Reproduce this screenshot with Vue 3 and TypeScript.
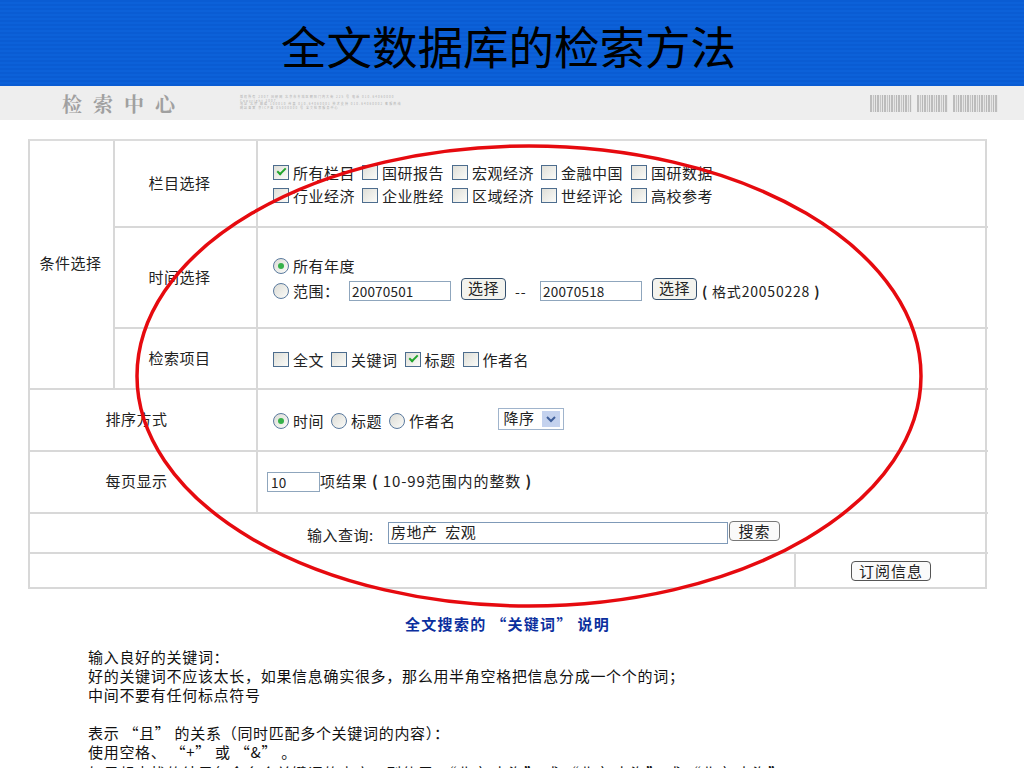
<script setup lang="ts">
const row1 = [
  { t: '所有栏目', c: true },
  { t: '国研报告', c: false },
  { t: '宏观经济', c: false },
  { t: '金融中国', c: false },
  { t: '国研数据', c: false },
]
const row2 = ['行业经济', '企业胜经', '区域经济', '世经评论', '高校参考']
const items = [
  { t: '全文', c: false },
  { t: '关键词', c: false },
  { t: '标题', c: true },
  { t: '作者名', c: false },
]
const sorts = [
  { t: '时间', c: true },
  { t: '标题', c: false },
  { t: '作者名', c: false },
]
</script>

<template>
  <div class="slide">
    <header class="head"><h1>全文数据库的检索方法</h1></header>
    <div class="strip">
      <div class="logo">检索中心</div>
      <div class="tiny">
        <span>版权所有 2007 国研网 北京市东城区朝阳门内大街 225 号 电话 010-64060000</span>
        <span>Copyright 2007</span>
        <span>地址 北京 邮编 100010 传真 010-64060001 技术支持 010-64060002 客服热线</span>
        <span>网站备案 京ICP备 05000000 号 全文检索服务中心</span>
      </div>
      <div class="code">
        <i class="bars b1"></i>
        <i class="bars b2"></i>
        <i class="bars b3"></i>
      </div>
    </div>

    <section class="form">
      <div class="c-a">条件选择</div>
      <div class="c-b r1">栏目选择</div>
      <div class="c-c r1 lines">
        <div class="line cols">
          <label v-for="x in row1" :key="x.t" class="opt">
            <span class="box" :class="{ on: x.c }"></span>{{ x.t }}
          </label>
        </div>
        <div class="line cols">
          <label v-for="x in row2" :key="x" class="opt"><span class="box"></span>{{ x }}</label>
        </div>
      </div>
      <div class="c-b r2">时间选择</div>
      <div class="c-c r2 lines wide">
        <div class="line"><label class="opt"><span class="radio on"></span>所有年度</label></div>
        <div class="line dates">
          <label class="opt range"><span class="radio"></span>范围：</label>
          <span class="field date">20070501</span>
          <span class="btn">选择</span>
          <span class="dash">--</span>
          <span class="field date">20070518</span>
          <span class="btn">选择</span>
          <span class="fmt"><b>(</b> 格式20050228 <b>)</b></span>
        </div>
      </div>
      <div class="c-b r3">检索项目</div>
      <div class="c-c r3 line gap">
        <label v-for="x in items" :key="x.t" class="opt">
          <span class="box" :class="{ on: x.c }"></span>{{ x.t }}
        </label>
      </div>
      <div class="c-w r4">排序方式</div>
      <div class="c-c r4 line sort">
        <label v-for="x in sorts" :key="x.t" class="opt">
          <span class="radio" :class="{ on: x.c }"></span>{{ x.t }}
        </label>
        <span class="select"><span class="sel-text">降序</span><span class="arrow"><svg width="10" height="7" viewBox="0 0 10 7"><path d="M1 1l4 4 4-4" fill="none" stroke="#3f5f9a" stroke-width="2"/></svg></span></span>
      </div>
      <div class="c-w r5">每页显示</div>
      <div class="c-c r5 line count">
        <span class="field num">10</span><span class="count-text">项结果 <b>(</b> 10-99范围内的整数 <b>)</b></span>
      </div>
      <div class="r6 search">
        <span class="q">输入查询:</span>
        <span class="field query">房地产&nbsp; 宏观</span>
        <span class="btn grey">搜索</span>
      </div>
      <div class="r7 foot-l"></div>
      <div class="r7 foot-r"><span class="btn grey sub">订阅信息</span></div>
    </section>

    <h2 class="note-title">全文搜索的 “关键词” 说明</h2>
    <div class="notes">
      <p>输入良好的关键词：</p>
      <p>好的关键词不应该太长，如果信息确实很多，那么用半角空格把信息分成一个个的词；</p>
      <p>中间不要有任何标点符号</p>
      <p class="blank">&nbsp;</p>
      <p>表示 “且” 的关系（同时匹配多个关键词的内容）：</p>
      <p>使用空格、 “+” 或 “&amp;” 。</p>
      <p class="last">如果想查找的结果包含多个关键词的内容，则使用：“北京 上海” 或 “北京 上海” 或 “北京 上海”</p>
    </div>

    <svg class="ring" width="1024" height="768" viewBox="0 0 1024 768">
      <ellipse cx="529" cy="376" rx="392" ry="230" fill="none" stroke="#e60a0f" stroke-width="3.500"/>
    </svg>
  </div>
</template>

<style scoped>
.slide {
  position: relative;
  width: 1024px;
  height: 768px;
  overflow: hidden;
  background: #fff;
  font-family: "Noto Sans CJK SC", "Liberation Sans", sans-serif;
  font-size: 15px;
  letter-spacing: 0.5px;
  color: #222;
}
.head {
  height: 86px;
  background: repeating-linear-gradient(180deg, #0a5cd3 0 2px, #0c61d9 2px 4px);
  display: flex;
  align-items: center;
  justify-content: center;
}
.head h1 {
  margin: 6px 7px 0 0;
  font-size: 45.500px;
  line-height: 1;
  font-weight: 400;
  letter-spacing: 0;
  color: #000;
}
.strip {
  height: 34px;
  background: #eeeeee;
  display: flex;
  align-items: center;
  padding: 0 26px 0 62px;
}
.logo {
  flex: none;
  width: 178px;
  font-family: "Noto Serif CJK SC", "Noto Sans CJK SC", sans-serif;
  font-size: 20px;
  font-weight: 700;
  letter-spacing: 11px;
  color: #a0a0a0;
  white-space: nowrap;
}
.tiny {
  display: flex;
  flex-direction: column;
  font-size: 3px;
  line-height: 3.500px;
  letter-spacing: 1.100px;
  color: #b0b0b0;
  white-space: nowrap;
}
.code {
  margin-left: auto;
  width: 128px;
  height: 17px;
  display: flex;
  justify-content: space-between;
}
.bars {
  display: block;
  background: repeating-linear-gradient(90deg, #bcbcbc 0 2px, #e6e6e6 2px 3px, #c6c6c6 3px 4px, #e6e6e6 4px 5px, #b8b8b8 5px 6px, #e6e6e6 6px 7px);
}
.b1 { width: 42px; }
.b2 { width: 31px; }
.b3 { width: 45px; }
.form {
  margin: 19px 0 0 28px;
  width: 959px;
  height: 450px;
  box-sizing: border-box;
  border: 2px solid #d8d8d8;
  border-top-color: #dcdcdc;
  display: grid;
  grid-template-columns: 85px 143px 538px 192px;
  grid-template-rows: 87px 101px 61px 62px 62px 40px 1fr;
}
.form > div {
  box-sizing: border-box;
}
.c-a {
  grid-column: 1;
  grid-row: 1 / 4;
  display: flex;
  align-items: center;
  justify-content: center;
  border-right: 2px solid #d8d8d8;
  border-bottom: 2px solid #d8d8d8;
  padding: 0 2px 4px 0;
}
.c-b {
  grid-column: 2;
  display: flex;
  align-items: center;
  justify-content: center;
  border-right: 2px solid #d8d8d8;
  border-bottom: 2px solid #d8d8d8;
  padding: 0 12px 3px 0;
}
.c-w {
  grid-column: 1 / 3;
  display: flex;
  align-items: center;
  justify-content: center;
  border-right: 2px solid #d8d8d8;
  border-bottom: 2px solid #d8d8d8;
  padding: 0 13px 3px 0;
}
.c-c {
  grid-column: 3 / 5;
  border-bottom: 2px solid #d8d8d8;
  padding-left: 15px;
}
.r1 { grid-row: 1; }
.r2 { grid-row: 2; }
.r3 { grid-row: 3; }
.r4 { grid-row: 4; }
.r5 { grid-row: 5; }
.r6 { grid-row: 6; }
.r7 { grid-row: 7; }
.lines {
  display: flex;
  flex-direction: column;
  justify-content: center;
  gap: 1px;
}
.wide {
  gap: 3px;
  padding-top: 1px;
}
.line {
  display: flex;
  align-items: center;
  height: 22px;
}
.c-c.line {
  height: auto;
}
.cols {
  display: grid;
  grid-template-columns: 89px 90px 89px 90px 90px;
}
.gap {
  gap: 7px;
  padding-top: 2px;
}
.opt {
  display: flex;
  align-items: center;
  gap: 4px;
  white-space: nowrap;
}
.box {
  flex: none;
  box-sizing: border-box;
  width: 16px;
  height: 15px;
  border: 1px solid #4d6d8e;
  background: linear-gradient(135deg, #dfdfd8, #fbfbf8);
  position: relative;
}
.box.on::after {
  content: "";
  position: absolute;
  left: 3px;
  top: 2px;
  width: 7px;
  height: 3px;
  border-left: 2px solid #22a52c;
  border-bottom: 2px solid #22a52c;
  transform: rotate(-45deg);
}
.radio {
  flex: none;
  box-sizing: border-box;
  width: 16px;
  height: 16px;
  border-radius: 50%;
  border: 1px solid #5a7a9e;
  background: linear-gradient(135deg, #dcdcd6, #fbfbf8);
  position: relative;
}
.radio.on::after {
  content: "";
  position: absolute;
  left: 4px;
  top: 4px;
  width: 6px;
  height: 6px;
  border-radius: 50%;
  background: #36b14a;
}
.range {
  width: 76px;
}
.field {
  box-sizing: border-box;
  display: flex;
  align-items: center;
  background: #fff;
  border: 1px solid #8fa6bd;
  font-size: 13.500px;
  letter-spacing: 0.200px;
  color: #222;
  padding-left: 2px;
}
.date {
  flex: none;
  width: 102px;
  height: 20px;
}
.btn {
  flex: none;
  box-sizing: border-box;
  display: inline-flex;
  align-items: center;
  justify-content: center;
  width: 45px;
  height: 22px;
  margin: -4px 0 0 10px;
  padding-bottom: 3px;
  border: 1px solid #34506e;
  border-radius: 4px;
  background: #f3f3ee;
  font-size: 15px;
  line-height: 1;
}
.dash {
  flex: none;
  width: 25px;
  margin-left: 9px;
  font-size: 14px;
  letter-spacing: 1px;
}
.fmt {
  margin-left: 5px;
  font-size: 14px;
  letter-spacing: 0.800px;
  white-space: pre;
}
.sort {
  gap: 7px;
  padding-top: 1px;
}
.select {
  box-sizing: border-box;
  display: flex;
  align-items: center;
  justify-content: space-between;
  width: 66px;
  height: 22px;
  margin: -3px 0 0 35px;
  padding: 0 3px 0 5px;
  border: 1px solid #a0b4cc;
  font-size: 15px;
}
.sel-text {
  margin-top: -4px;
}
.arrow {
  display: flex;
  align-items: center;
  justify-content: center;
  width: 18px;
  height: 16px;
  background: #c4d2ee;
}
.count {
  padding-left: 9px;
}
.count-text {
  margin-top: -3px;
  letter-spacing: 0.900px;
  white-space: pre;
}
.num {
  width: 53px;
  height: 20px;
  padding-left: 3px;
}
.search {
  grid-column: 1 / 5;
  display: flex;
  align-items: center;
  border-bottom: 2px solid #d8d8d8;
  padding: 0 0 0 277px;
}
.q {
  flex: none;
  width: 81px;
  font-size: 15px;
  padding-top: 3px;
}
.query {
  flex: none;
  width: 340px;
  height: 22px;
  font-size: 15px;
  letter-spacing: 0.500px;
  padding: 0 0 4px 2px;
  border-color: #7f9ab8;
}
.grey {
  width: 51px;
  height: 20px;
  margin: -4px 0 0 1px;
  padding-bottom: 1px;
  border-color: #777;
  border-radius: 4px;
  background: #fafafa;
  letter-spacing: 1px;
}
.foot-l {
  grid-column: 1 / 4;
  border-right: 2px solid #d8d8d8;
}
.foot-r {
  grid-column: 4;
  display: flex;
  align-items: center;
  padding-left: 55px;
}
.sub {
  width: 80px;
  height: 20px;
  margin: 1px 0 0 0;
  border-color: #555;
}
.note-title {
  margin: 25px 0 0 405px;
  font-size: 15px;
  line-height: 20px;
  font-weight: 700;
  letter-spacing: 1.300px;
  color: #0b2f9e;
}
.notes {
  margin: 13px 0 0 88px;
  font-size: 15px;
  line-height: 19px;
  letter-spacing: 0.700px;
  color: #111;
}
.notes p {
  margin: 0;
  white-space: nowrap;
}
.notes .last {
  margin-top: 2px;
}
.ring {
  position: absolute;
  left: 0;
  top: 0;
  pointer-events: none;
}
</style>
